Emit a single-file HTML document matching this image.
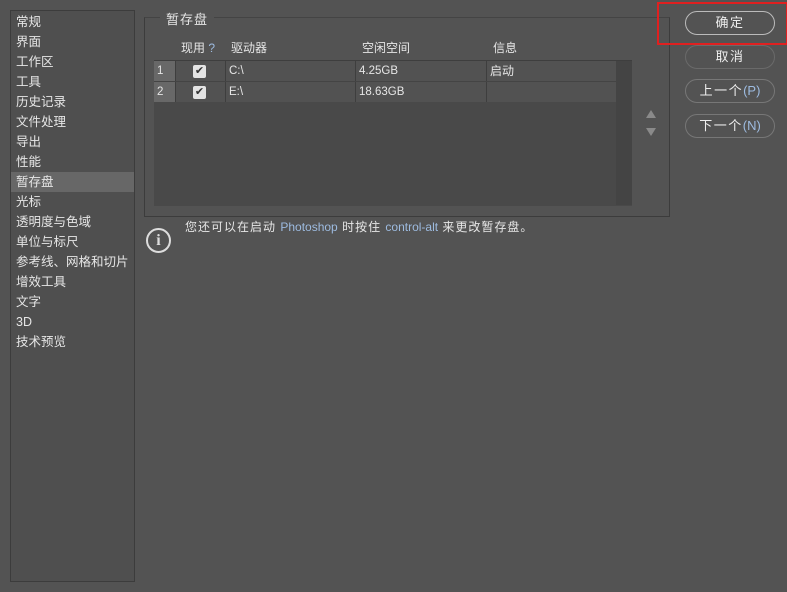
<!DOCTYPE html><html><head><style>
body{margin:0;width:787px;height:592px;background:#535353;font-family:"Liberation Sans","Noto Sans CJK SC",sans-serif;font-size:12px;color:#e6e6e6;position:relative;overflow:hidden}
.a{position:absolute}
.side{left:10px;top:10px;width:123px;height:570px;border:1px solid #3c3c3c;background:#4f4f4f}
.side div{height:20px;line-height:20px;padding-left:5px;font-size:12.5px}
.side .sel{background:#676767}
.btn{left:685px;width:88px;height:22px;border:1px solid #777;border-radius:12px;text-align:center;line-height:22px;font-size:13px;color:#eee;letter-spacing:1.5px}
.btn .blue{letter-spacing:0}
.blue{color:#9dbbe0}
.cell{position:absolute;height:20px;line-height:20px;font-size:11.5px}
</style></head><body>
<div class="a side">
<div style="margin-top:1px">常规</div><div>界面</div><div>工作区</div><div>工具</div><div>历史记录</div><div>文件处理</div><div>导出</div><div>性能</div><div class="sel">暂存盘</div><div>光标</div><div>透明度与色域</div><div>单位与标尺</div><div>参考线、网格和切片</div><div>增效工具</div><div>文字</div><div>3D</div><div>技术预览</div>
</div>
<div class="a" style="left:144px;top:17px;width:524px;height:198px;border:1px solid #3c3c3c;border-top-color:#444"></div>
<div class="a" style="left:160px;top:9px;padding:0 6px;background:#535353;font-size:13px;letter-spacing:1px">暂存盘</div>
<div class="a" style="left:181px;top:39px">现用 <span class="blue">?</span></div>
<div class="a" style="left:231px;top:39px">驱动器</div>
<div class="a" style="left:362px;top:39px">空闲空间</div>
<div class="a" style="left:493px;top:39px">信息</div>
<div class="a" style="left:154px;top:60px;width:478px;height:145px;background:#494949;border-top:1px solid #3e3e3e"></div>
<div class="a" style="left:616px;top:61px;width:16px;height:144px;background:#444"></div>
<div class="a" style="left:154px;top:61px;width:462px;height:41px;background:#525252"></div>
<div class="a" style="left:154px;top:61px;width:21px;height:20px;background:#686868"></div>
<div class="a" style="left:154px;top:82px;width:21px;height:20px;background:#686868"></div>
<div class="a" style="left:175px;top:61px;width:1px;height:41px;background:#3e3e3e"></div>
<div class="a" style="left:225px;top:61px;width:1px;height:41px;background:#3e3e3e"></div>
<div class="a" style="left:355px;top:61px;width:1px;height:41px;background:#3e3e3e"></div>
<div class="a" style="left:486px;top:61px;width:1px;height:41px;background:#3e3e3e"></div>
<div class="a" style="left:154px;top:81px;width:462px;height:1px;background:#444"></div>
<div class="cell" style="left:157px;top:61px">1</div><div class="cell" style="left:157px;top:82px">2</div>
<div class="a" style="left:193px;top:65px;width:13px;height:13px;background:#e4e4e4;border-radius:2px;color:#333;font-size:11px;line-height:13px;text-align:center">✔</div>
<div class="a" style="left:193px;top:86px;width:13px;height:13px;background:#e4e4e4;border-radius:2px;color:#333;font-size:11px;line-height:13px;text-align:center">✔</div>
<div class="cell" style="left:229px;top:61px">C:\</div><div class="cell" style="left:229px;top:82px">E:\</div>
<div class="cell" style="left:359px;top:61px">4.25GB</div><div class="cell" style="left:359px;top:82px">18.63GB</div>
<div class="cell" style="left:490px;top:61px;font-size:12px">启动</div>
<div class="a" style="left:646px;top:110px;width:0;height:0;border:5px solid transparent;border-bottom:8px solid #8a8a8a;border-top:0"></div>
<div class="a" style="left:646px;top:128px;width:0;height:0;border:5px solid transparent;border-top:8px solid #8a8a8a;border-bottom:0"></div>
<div class="a" style="left:146px;top:228px;width:21px;height:21px;border:2px solid #ddd;border-radius:50%;text-align:center;font:bold 16px/21px 'Liberation Serif',serif;color:#ddd">i</div>
<div class="a" style="left:185px;top:218px;letter-spacing:1px">您还可以在启动 <span class="blue" style="letter-spacing:0">Photoshop</span> 时按住 <span class="blue" style="letter-spacing:0">control-alt</span> 来更改暂存盘。</div>
<div class="a" style="left:657px;top:2px;width:127px;height:39px;border:2px solid #e02020"></div>
<div class="a btn" style="top:11px;border-color:#bbb">确定</div>
<div class="a btn" style="top:45px;border-color:#6a6a6a">取消</div>
<div class="a btn" style="top:79px">上一个<span class="blue">(P)</span></div>
<div class="a btn" style="top:114px">下一个<span class="blue">(N)</span></div>
</body></html>
